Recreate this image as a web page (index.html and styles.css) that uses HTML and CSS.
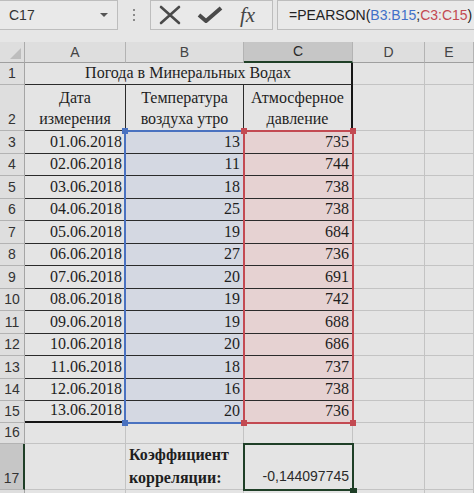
FILE: index.html
```html
<!DOCTYPE html>
<html lang="ru">
<head>
<meta charset="utf-8">
<title>PEARSON</title>
<link rel="stylesheet" href="styles.css">
</head>
<body>
<div class="app">
  <div class="toolbar">
    <div class="namebox"><span class="nb-text">C17</span><span class="dd"></span></div>
    <div class="dots"><i></i><i></i><i></i></div>
    <div class="btns">
      <svg class="ico" width="24" height="20" viewBox="0 0 24 20"><path d="M3 2 L21 18 M21 2 L3 18" stroke="#4a4a4a" stroke-width="2.6" fill="none" stroke-linecap="round"/></svg>
      <svg class="ico" width="26" height="18" viewBox="0 0 26 18"><path d="M2 9 L9 15 L24 2" stroke="#4a4a4a" stroke-width="4" fill="none" stroke-linejoin="round"/></svg>
      <span class="fx">fx</span>
    </div>
    <div class="formula">=PEARSON(<span class="rb">B3:B15</span>;<span class="rr">C3:C15</span>)</div>
  </div>

  <div class="sheet">
    <div class="cell corner"><span class="tri"></span></div>
    <div class="cell hd">A</div>
    <div class="cell hd">B</div>
    <div class="cell hd sel">C</div>
    <div class="cell hd">D</div>
    <div class="cell hd">E</div>

    <div class="cell rh">1</div>
    <div class="cell title tb redge">Погода в Минеральных Водах</div>
    <div class="cell"></div><div class="cell"></div>

    <div class="cell rh">2</div>
    <div class="cell ctr tb"><span>Дата<br>измерения</span></div>
    <div class="cell ctr tb"><span>Температура<br>воздуха утро</span></div>
    <div class="cell ctr tb redge"><span>Атмосферное<br>давление</span></div>
    <div class="cell"></div><div class="cell"></div>

    <div class="cell rh">3</div><div class="cell num tb">01.06.2018</div><div class="cell num tb fb">13</div><div class="cell num tb fc">735</div><div class="cell"></div><div class="cell"></div>
    <div class="cell rh">4</div><div class="cell num tb">02.06.2018</div><div class="cell num tb fb">11</div><div class="cell num tb fc">744</div><div class="cell"></div><div class="cell"></div>
    <div class="cell rh">5</div><div class="cell num tb">03.06.2018</div><div class="cell num tb fb">18</div><div class="cell num tb fc">738</div><div class="cell"></div><div class="cell"></div>
    <div class="cell rh">6</div><div class="cell num tb">04.06.2018</div><div class="cell num tb fb">25</div><div class="cell num tb fc">738</div><div class="cell"></div><div class="cell"></div>
    <div class="cell rh">7</div><div class="cell num tb">05.06.2018</div><div class="cell num tb fb">19</div><div class="cell num tb fc">684</div><div class="cell"></div><div class="cell"></div>
    <div class="cell rh">8</div><div class="cell num tb">06.06.2018</div><div class="cell num tb fb">27</div><div class="cell num tb fc">736</div><div class="cell"></div><div class="cell"></div>
    <div class="cell rh">9</div><div class="cell num tb">07.06.2018</div><div class="cell num tb fb">20</div><div class="cell num tb fc">691</div><div class="cell"></div><div class="cell"></div>
    <div class="cell rh">10</div><div class="cell num tb">08.06.2018</div><div class="cell num tb fb">19</div><div class="cell num tb fc">742</div><div class="cell"></div><div class="cell"></div>
    <div class="cell rh">11</div><div class="cell num tb">09.06.2018</div><div class="cell num tb fb">19</div><div class="cell num tb fc">688</div><div class="cell"></div><div class="cell"></div>
    <div class="cell rh">12</div><div class="cell num tb">10.06.2018</div><div class="cell num tb fb">20</div><div class="cell num tb fc">686</div><div class="cell"></div><div class="cell"></div>
    <div class="cell rh">13</div><div class="cell num tb">11.06.2018</div><div class="cell num tb fb">18</div><div class="cell num tb fc">737</div><div class="cell"></div><div class="cell"></div>
    <div class="cell rh">14</div><div class="cell num tb">12.06.2018</div><div class="cell num tb fb">16</div><div class="cell num tb fc">738</div><div class="cell"></div><div class="cell"></div>
    <div class="cell rh">15</div><div class="cell num tb bedge">13.06.2018</div><div class="cell num tb fb">20</div><div class="cell num tb fc">736</div><div class="cell"></div><div class="cell"></div>

    <div class="cell rh">16</div><div class="cell"></div><div class="cell"></div><div class="cell"></div><div class="cell"></div><div class="cell"></div>

    <div class="cell rh sel">17</div>
    <div class="cell"></div>
    <div class="cell label"><span>Коэффициент<br>корреляции:</span></div>
    <div class="cell num val">-0,144097745</div>
    <div class="cell"></div><div class="cell"></div>

    <div class="cell rh"></div><div class="cell"></div><div class="cell"></div><div class="cell"></div><div class="cell"></div><div class="cell"></div>

    <div class="range range-b"></div>
    <div class="range range-c"></div>
    <span class="handle hb" style="left:122px;top:86px"></span>
    <span class="handle hb" style="left:122px;top:378px"></span>
    <span class="handle hc" style="left:241px;top:86px"></span>
    <span class="handle hc" style="left:350px;top:86px"></span>
    <span class="handle hc" style="left:241px;top:378px"></span>
    <span class="handle hc" style="left:350px;top:378px"></span>
    <div class="active"></div>
    <span class="handle ha" style="left:350px;top:446px"></span>
  </div>
</div>
</body>
</html>
```

FILE: styles.css
```css
html, body {
  margin: 0;
  padding: 0;
  background: #e6e6e6;
  overflow: hidden;
}

.app {
  width: 474px;
  height: 493px;
  overflow: hidden;
  background: #e6e6e6;
}

/* formula bar */
.toolbar {
  height: 30px;
  margin-bottom: 12px;
  display: flex;
  align-items: stretch;
  font-family: "Liberation Sans", Arial, sans-serif;
}

.namebox {
  width: 118px;
  box-sizing: border-box;
  border: 1px solid #bdbdbd;
  border-left: none;
  background: #e9e9e9;
  display: flex;
  align-items: center;
  justify-content: space-between;
  padding: 0 9px 0 9px;
  font-size: 14px;
  color: #333;
}

.dd {
  width: 0;
  height: 0;
  border-left: 4px solid transparent;
  border-right: 4px solid transparent;
  border-top: 4px solid #555;
}

.dots {
  width: 32px;
  display: flex;
  flex-direction: column;
  align-items: center;
  justify-content: center;
  gap: 3px;
}

.dots i {
  width: 2px;
  height: 2px;
  background: #8a8a8a;
}

.btns {
  width: 123px;
  box-sizing: border-box;
  border: 1px solid #bdbdbd;
  background: #e9e9e9;
  display: flex;
  align-items: center;
  padding: 0 0 0 7px;
  gap: 15px;
}

.fx {
  font-family: "Liberation Serif", "Times New Roman", serif;
  font-style: italic;
  font-size: 21px;
  color: #454545;
  margin-left: 2px;
  line-height: 1;
}

.formula {
  flex: 1;
  margin-left: 4px;
  box-sizing: border-box;
  border: 1px solid #bdbdbd;
  border-right: none;
  background: #e9e9e9;
  display: flex;
  align-items: center;
  padding-left: 11px;
  font-size: 14px;
  color: #222;
  white-space: nowrap;
}

.rb { color: #4170c8; }
.rr { color: #c34a52; }

/* sheet */
.sheet {
  position: relative;
  display: grid;
  grid-template-columns: 25px 101px 118px 109px 72px 49px;
  grid-template-rows: 21px 22px 46px 23px 22px 23px 22px 23px 22px 23px 22px 23px 22px 23px 22px 22px 21px 46px 30px;
}

.cell {
  box-sizing: border-box;
  border-right: 1px solid #c3c3c3;
  border-bottom: 1px solid #c3c3c3;
  background: #e4e4e4;
  display: flex;
  align-items: flex-end;
  padding: 0 3px 1px;
  font-family: "Liberation Serif", "Times New Roman", serif;
  font-size: 16px;
  line-height: 21px;
  color: #1e1e1e;
  white-space: nowrap;
  overflow: hidden;
}

.corner {
  background: #dedede;
  border-right: 1px solid #ababab;
  border-bottom: 1px solid #9f9f9f;
  position: relative;
}

.tri {
  position: absolute;
  right: 3px;
  bottom: 3px;
  width: 0;
  height: 0;
  border-left: 11px solid transparent;
  border-bottom: 11px solid #bdbdbd;
}

.hd {
  background: #dedede;
  border-right: 1px solid #b3b3b3;
  border-bottom: 1px solid #9f9f9f;
  justify-content: center;
  align-items: center;
  padding: 0;
  font-family: "Liberation Sans", Arial, sans-serif;
  font-size: 14px;
  color: #444;
}

.hd.sel {
  background: #c6c6c6;
  border-bottom: 2px solid #1f3f27;
  color: #2a2a2a;
}

.rh {
  background: #dedede;
  border-right: 1px solid #a5a5a5;
  border-bottom: 1px solid #b3b3b3;
  justify-content: center;
  padding: 0 0 0 0;
  font-family: "Liberation Sans", Arial, sans-serif;
  font-size: 14px;
  color: #333;
}

.rh.sel {
  background: #c6c6c6;
  border-right: 2px solid #1f3f27;
}

.title {
  grid-column: span 3;
  justify-content: center;
}

.ctr {
  justify-content: center;
}

.ctr span,
.label span {
  white-space: nowrap;
  text-align: center;
}

.num {
  justify-content: flex-end;
}

.tb {
  border-right-color: #2b2b2b;
  border-bottom-color: #2b2b2b;
}

.redge {
  border-right: 2px solid #151515;
}

.bedge {
  border-bottom: 2px solid #151515;
}

.fb { background: #d4d8e2; }
.fc { background: #e6d2d2; }

.label {
  font-weight: bold;
  line-height: 23px;
  padding-bottom: 0;
}

.label span {
  text-align: left;
}

.val {
  font-family: "Liberation Sans", Arial, sans-serif;
  font-size: 14px;
  color: #2a2a2a;
  padding-bottom: 2px;
}

/* overlays */
.range {
  position: absolute;
  box-sizing: border-box;
  pointer-events: none;
}

.range-b {
  left: 124px;
  top: 88px;
  width: 121px;
  height: 294px;
  border: 2px solid #4a72c0;
}

.range-c {
  left: 243px;
  top: 88px;
  width: 111px;
  height: 294px;
  border: 2px solid #c34a52;
}

.handle {
  position: absolute;
  width: 6px;
  height: 6px;
  box-sizing: border-box;
}

.hb { background: #4a72c0; }
.hc { background: #c34a52; }
.ha { background: #1f3f27; width: 7px; height: 7px; }

.active {
  position: absolute;
  left: 243px;
  top: 401px;
  width: 111px;
  height: 48px;
  box-sizing: border-box;
  border: 2px solid #1f3f27;
}
```
